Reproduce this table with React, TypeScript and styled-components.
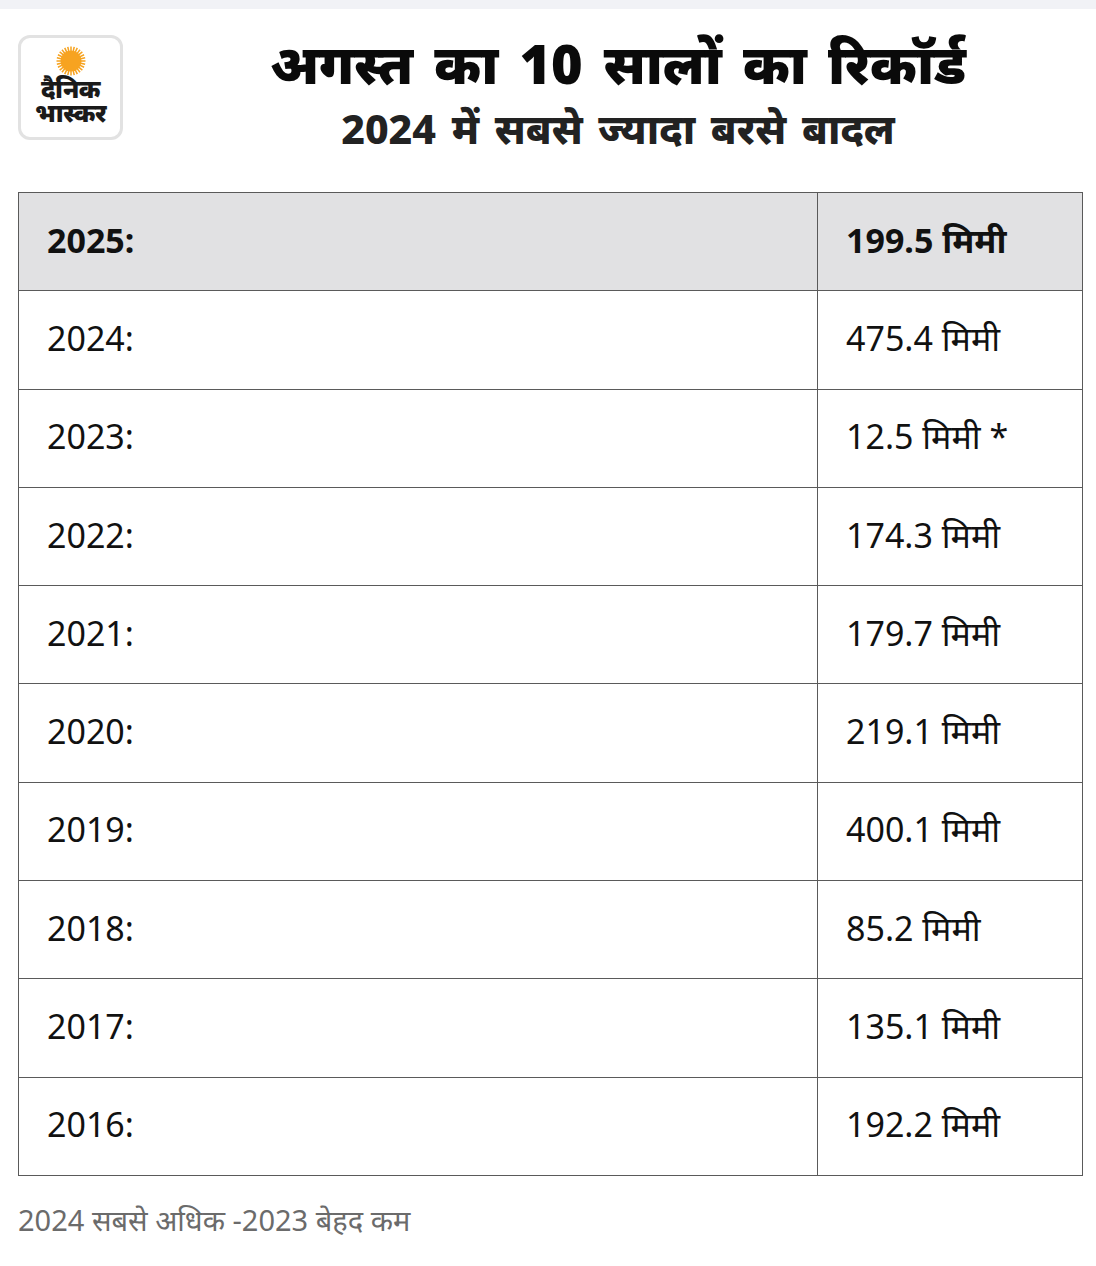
import styled, { createGlobalStyle } from "styled-components";

const GlobalStyle = createGlobalStyle`
  body {
    margin: 0;
    background: #ffffff;
    font-family: "Noto Sans", "Noto Sans Devanagari", "Lohit Devanagari", sans-serif;
    color: #111111;
  }
`;

const Page = styled.div`
  width: 1096px;
  min-height: 1266px;
  background: #ffffff;
`;

const TopStrip = styled.div`
  height: 9px;
  background: #f1f2f6;
`;

const Header = styled.header`
  display: grid;
  grid-template-columns: 105px 1fr;
  column-gap: 17px;
  padding: 26px 0 0 18px;
  height: 183px;
  box-sizing: border-box;
`;

const Logo = styled.div`
  width: 105px;
  height: 105px;
  box-sizing: border-box;
  border: 3px solid #e2e2e2;
  border-radius: 12px;
  background: #ffffff;
  display: flex;
  flex-direction: column;
  align-items: center;
  padding-top: 8px;
`;

const LogoText = styled.span`
  font-size: 25px;
  line-height: 24px;
  font-weight: 900;
  color: #1a1a1a;
  letter-spacing: -0.5px;
  text-align: center;
`;

const TitleBlock = styled.div`
  display: flex;
  flex-direction: column;
  align-items: center;
`;

const Title = styled.h1`
  margin: 0;
  font-size: 54px;
  line-height: 56px;
  font-weight: 900;
  color: #0a0a0a;
  word-spacing: 7px;
  white-space: nowrap;
`;

const Subtitle = styled.h2`
  margin: 14px 0 0;
  font-size: 41px;
  line-height: 46px;
  font-weight: 800;
  color: #222222;
  word-spacing: 5px;
  white-space: nowrap;
`;

const Table = styled.table`
  margin-left: 18px;
  width: 1065px;
  border-collapse: collapse;
  table-layout: fixed;
`;

const Col = styled.col<{ $w?: number }>`
  width: ${(p) => (p.$w ? `${p.$w}px` : "auto")};
`;

const Row = styled.tr<{ $head?: boolean }>`
  height: 98.3px;
  background: ${(p) => (p.$head ? "#e1e1e3" : "#ffffff")};
  font-weight: ${(p) => (p.$head ? 700 : 400)};
`;

const Cell = styled.td`
  border: 1.5px solid #5a5a5a;
  padding: 0 0 4px 28px;
  font-size: 34px;
  color: #111111;
  white-space: nowrap;
`;

const Note = styled.p`
  margin: 26px 0 0 18px;
  font-size: 29px;
  line-height: 36px;
  color: #6b6b6b;
`;

const Sun = () => (
  <svg width="30" height="30" viewBox="0 0 30 30">
    {Array.from({ length: 28 }).map((_, i) => {
      const a = (i * Math.PI * 2) / 28;
      return (
        <line
          key={i}
          x1={15 + Math.cos(a) * 9}
          y1={15 + Math.sin(a) * 9}
          x2={15 + Math.cos(a) * 14.5}
          y2={15 + Math.sin(a) * 14.5}
          stroke="#f6a21e"
          strokeWidth="1.5"
        />
      );
    })}
    <circle cx="15" cy="15" r="10.5" fill="#f7a320" />
  </svg>
);

const rows: [string, string][] = [
  ["2024:", "475.4 मिमी"],
  ["2023:", "12.5 मिमी *"],
  ["2022:", "174.3 मिमी"],
  ["2021:", "179.7 मिमी"],
  ["2020:", "219.1 मिमी"],
  ["2019:", "400.1 मिमी"],
  ["2018:", "85.2 मिमी"],
  ["2017:", "135.1 मिमी"],
  ["2016:", "192.2 मिमी"],
];

const App = () => {
  return (
    <Page>
      <GlobalStyle />
      <TopStrip />
      <Header>
        <Logo>
          <Sun />
          <LogoText>
            दैनिक
            <br />
            भास्कर
          </LogoText>
        </Logo>
        <TitleBlock>
          <Title>अगस्त का 10 सालों का रिकॉर्ड</Title>
          <Subtitle>2024 में सबसे ज्यादा बरसे बादल</Subtitle>
        </TitleBlock>
      </Header>
      <Table>
        <colgroup>
          <Col $w={799} />
          <Col />
        </colgroup>
        <tbody>
          <Row $head>
            <Cell>2025:</Cell>
            <Cell>199.5 मिमी</Cell>
          </Row>
          {rows.map(([year, value]) => (
            <Row key={year}>
              <Cell>{year}</Cell>
              <Cell>{value}</Cell>
            </Row>
          ))}
        </tbody>
      </Table>
      <Note>2024 सबसे अधिक -2023 बेहद कम</Note>
    </Page>
  );
};

export default App;
